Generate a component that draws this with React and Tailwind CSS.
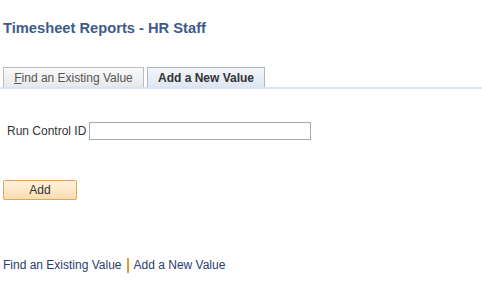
import React, { useState } from "react";

const App = () => {
  const [runId, setRunId] = useState("");

  return (
    <div
      className="w-[482px] h-[303px] bg-white overflow-hidden"
      style={{ fontFamily: '"Liberation Sans", Arial, sans-serif' }}
    >
      <h1 className="pt-[20px] pl-[3px] text-[14.7px] leading-4 font-bold text-[#3e5a88]">
        Timesheet Reports - HR Staff
      </h1>

      {/* pestañas */}
      <div className="mt-[31px] flex items-end border-b-2 border-[#dae4f0]">
        <div className="ml-[3px] w-[141px] h-[20px] flex items-center justify-center border border-b-0 border-[#b9bcc2] bg-gradient-to-b from-[#fafafa] to-[#e7e8ea] text-[12px] text-[#555]">
          <span><span className="underline">F</span>ind an Existing Value</span>
        </div>
        <div className="ml-[3px] w-[118px] h-[20px] flex items-center justify-center border border-b-0 border-[#a9b7cc] bg-gradient-to-b from-[#f4f7fb] to-[#dde6f2] text-[12px] font-bold text-[#333]">
          Add a New Value
        </div>
      </div>

      <div className="mt-[33px] flex items-center">
        <label htmlFor="runid" className="ml-[7px] mr-[3px] text-[12px] text-[#333]">
          Run Control ID
        </label>
        <input
          id="runid"
          autoFocus
          value={runId}
          onChange={(e) => setRunId(e.target.value)}
          className="w-[222px] h-[18px] border border-[#a9a9a9] outline-none px-[1px] text-[12px] caret-black"
        />
      </div>

      <button className="mt-[40px] ml-[3px] w-[74px] h-[20px] rounded-[2px] border border-[#e0a463] bg-gradient-to-b from-[#fef3df] to-[#fbdcac] text-[12px] text-[#333] flex items-center justify-center">
        Add
      </button>

      <div className="mt-[56px] ml-[3px] flex items-center text-[12px] text-[#2b3d6b]">
        <span>Find an Existing Value</span>
        <span className="mx-[5px] w-[2px] h-[15px] bg-[#e09a3c]" />
        <span>Add a New Value</span>
      </div>
    </div>
  );
};

export default App;
